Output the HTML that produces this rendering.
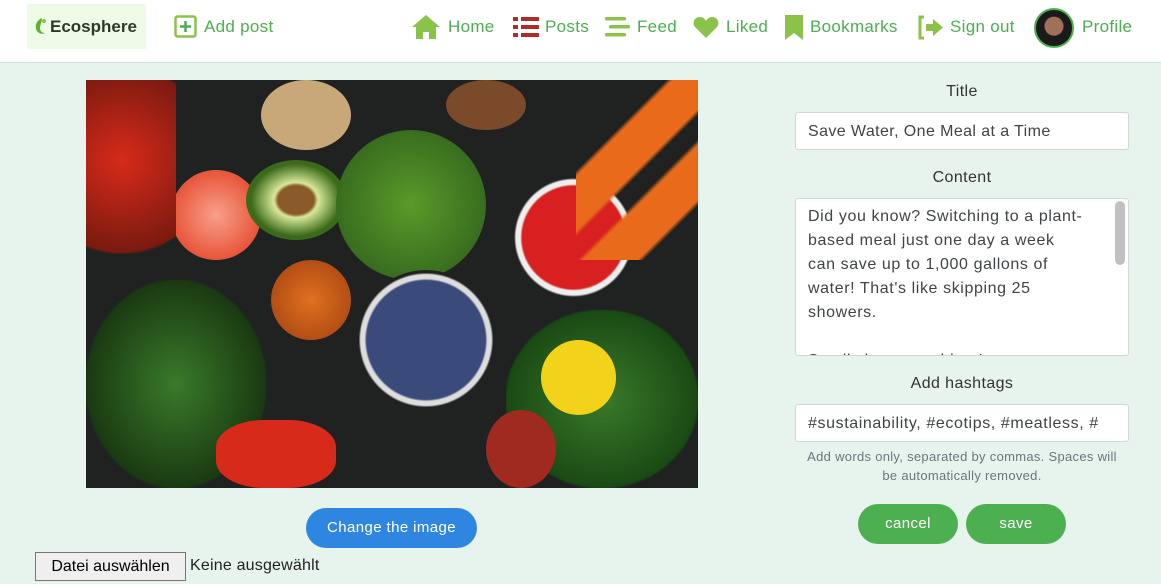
<!DOCTYPE html>
<html><head><meta charset="utf-8"><style>
*{box-sizing:border-box;margin:0;padding:0}
body{width:1161px;height:584px;overflow:hidden;background:#e7f4ed;font-family:"Liberation Sans",sans-serif;position:relative;color:#3f4448;letter-spacing:0.4px}
.nav{position:absolute;left:0;top:0;width:1161px;height:63px;background:#fff;border-bottom:1px solid #d6e2dc}
.a{position:absolute;font-size:17px;color:#4caf50;top:17px;white-space:nowrap;letter-spacing:0.3px}
.lbl{position:absolute;font-size:16px;color:#333;text-align:center;width:334px;left:795px}
.inp{position:absolute;left:795px;width:334px;background:#fff;border:1px solid #cfd8d5;border-radius:3px;font-size:16px;color:#3f4448;padding-left:12px}
.btn{position:absolute;background:#4caf50;color:#fff;border-radius:20px;font-size:15px;text-align:center;line-height:40px;height:40px;width:100px;top:504px}
</style></head><body>
<div class="nav">
<div style="position:absolute;left:27px;top:4px;width:119px;height:45px;background:#eefbe6"></div>
<svg style="position:absolute;left:34px;top:17px" width="14" height="18" viewBox="0 0 14 18"><path d="M8 1C3 3 1 8 2 12c1 4 6 6 9 4-3 0-5-2-5-5 0-3 2-6 2-10z" fill="#5fb236"/><circle cx="10" cy="4" r="2" fill="#8bc34a"/></svg>
<div style="position:absolute;left:50px;top:17px;font-size:17px;font-weight:bold;color:#2b3a2a;letter-spacing:0">Ecosphere</div>
<svg style="position:absolute;left:174px;top:15px" width="23" height="23" viewBox="0 0 23 23"><rect x="1.5" y="1.5" width="20" height="20" rx="2" fill="none" stroke="#8bc34a" stroke-width="2.5"/><path d="M11.5 6v11M6 11.5h11" stroke="#4caf50" stroke-width="2.5"/></svg>
<div class="a" style="left:204px">Add post</div>
<svg style="position:absolute;left:411px;top:14px" width="30" height="26" viewBox="0 0 30 26"><path d="M15 1L1 13h4v12h7v-7h6v7h7V13h4z" fill="#8bc34a"/></svg>
<div class="a" style="left:448px">Home</div>
<svg style="position:absolute;left:513px;top:17px" width="26" height="21" viewBox="0 0 26 21"><g fill="#b02a2a"><rect x="0" y="0" width="5" height="4"/><rect x="0" y="8" width="5" height="4"/><rect x="0" y="16" width="5" height="4"/><rect x="8" y="0" width="18" height="4"/><rect x="8" y="8" width="18" height="4"/><rect x="8" y="16" width="18" height="4"/></g></svg>
<div class="a" style="left:545px">Posts</div>
<svg style="position:absolute;left:605px;top:17px" width="25" height="21" viewBox="0 0 25 21"><g fill="#8bc34a"><rect x="0" y="0" width="21" height="3.5" rx="1.5"/><rect x="4" y="8" width="21" height="3.5" rx="1.5"/><rect x="0" y="16" width="21" height="3.5" rx="1.5"/></g></svg>
<div class="a" style="left:637px">Feed</div>
<svg style="position:absolute;left:693px;top:16px" width="26" height="23" viewBox="0 0 26 23"><path d="M13 22L2 11C-1 7 1 1 7 1c3 0 5 2 6 4 1-2 3-4 6-4 6 0 8 6 5 10z" fill="#8bc34a"/></svg>
<div class="a" style="left:726px">Liked</div>
<svg style="position:absolute;left:784px;top:14px" width="20" height="26" viewBox="0 0 20 26"><path d="M1 1h18v25l-9-7-9 7z" fill="#8bc34a"/></svg>
<div class="a" style="left:810px">Bookmarks</div>
<svg style="position:absolute;left:917px;top:15px" width="27" height="25" viewBox="0 0 27 25"><path d="M7 2H3v21h4" fill="none" stroke="#8bc34a" stroke-width="3"/><path d="M9 9h7V4l10 8.5L16 21v-5H9z" fill="#8bc34a"/></svg>
<div class="a" style="left:950px">Sign out</div>
<div style="position:absolute;left:1034px;top:8px;width:40px;height:40px;border-radius:50%;background:radial-gradient(circle at 50% 45%,#a0705a 0 9px,#1a1a1a 10px);border:2px solid #4caf50"></div>
<div class="a" style="left:1082px">Profile</div>
</div>
<div style="position:absolute;left:86px;top:80px;width:612px;height:408px;background:#1f2220;overflow:hidden">
<div style="position:absolute;left:85px;top:90px;width:90px;height:90px;border-radius:50%;background:radial-gradient(#f7a08a,#e8553a 70%,#f5d6a0 72%)"></div>
<div style="position:absolute;left:160px;top:80px;width:100px;height:80px;border-radius:50%;background:radial-gradient(#8a5a2a 0 18px,#d9e89a 22px,#3b6b1a 45px)"></div>
<div style="position:absolute;left:0;top:0;width:90px;height:200px;background:radial-gradient(circle at 40% 40%,#d82a1a,#7a1a10 70%,transparent 72%)"></div>
<div style="position:absolute;left:250px;top:50px;width:150px;height:150px;border-radius:50%;background:radial-gradient(#5a9a2a,#2a5a1a)"></div>
<div style="position:absolute;left:415px;top:85px;width:145px;height:145px;border-radius:50%;background:radial-gradient(#d82020 50%,#eee 52%,#eee 56%,#1f2220 58%)"></div>
<div style="position:absolute;left:270px;top:190px;width:140px;height:140px;border-radius:50%;background:radial-gradient(#3a4a7a 60%,#ddd 62%,#ddd 66%,#1f2220 68%)"></div>
<div style="position:absolute;left:185px;top:180px;width:80px;height:80px;border-radius:50%;background:radial-gradient(#e07020,#a04010)"></div>
<div style="position:absolute;left:0;top:200px;width:180px;height:208px;background:radial-gradient(#3a7a2a,#1a3a12 70%,transparent 72%)"></div>
<div style="position:absolute;left:420px;top:230px;width:192px;height:178px;background:radial-gradient(#3a7a2a,#1a4a14 70%,transparent 72%)"></div>
<div style="position:absolute;left:455px;top:260px;width:75px;height:75px;border-radius:50%;background:#f2d31a"></div>
<div style="position:absolute;left:490px;top:0;width:122px;height:180px;background:linear-gradient(135deg,transparent 30%,#e86a1a 32%,#e86a1a 50%,transparent 52%,transparent 60%,#e86a1a 62%,#e86a1a 80%,transparent 82%)"></div>
<div style="position:absolute;left:175px;top:0;width:90px;height:70px;border-radius:50%;background:#c8a878"></div>
<div style="position:absolute;left:360px;top:0;width:80px;height:50px;border-radius:50%;background:#7a4a2a"></div>
<div style="position:absolute;left:130px;top:340px;width:120px;height:68px;border-radius:40%;background:#d82a1a"></div>
<div style="position:absolute;left:400px;top:330px;width:70px;height:78px;border-radius:50%;background:#a02a20"></div>
</div>
<div style="position:absolute;left:306px;top:508px;width:171px;height:40px;border-radius:20px;background:#2f86e0;color:#fff;font-size:15px;text-align:center;line-height:40px">Change the image</div>
<div style="position:absolute;left:35px;top:552px;width:151px;height:29px;border:1px solid #767676;background:#efefef;font-size:16px;color:#000;text-align:center;line-height:27px;letter-spacing:0">Datei auswählen</div>
<div style="position:absolute;left:190px;top:557px;font-size:16px;color:#222;letter-spacing:0.2px">Keine ausgewählt</div>
<div class="lbl" style="top:83px">Title</div>
<div class="inp" style="top:112px;height:38px;line-height:38px">Save Water, One Meal at a Time</div>
<div class="lbl" style="top:169px">Content</div>
<div class="inp" style="top:198px;height:158px;padding:6px 20px 0 12px;line-height:24px;overflow:hidden;letter-spacing:0.6px;white-space:nowrap">Did you know? Switching to a plant-<br>based meal just one day a week<br>can save up to 1,000 gallons of<br>water! That's like skipping 25<br>showers.<br><br>Small changes add up!</div>
<div style="position:absolute;left:1115px;top:201px;width:10px;height:64px;border-radius:5px;background:#c1c1c1"></div>
<div class="lbl" style="top:375px">Add hashtags</div>
<div class="inp" style="top:404px;height:38px;line-height:38px;overflow:hidden;white-space:nowrap;letter-spacing:0.6px">#sustainability, #ecotips, #meatless, #</div>
<div style="position:absolute;left:790px;top:447px;width:344px;font-size:13px;color:#6c757d;text-align:center;line-height:19px;letter-spacing:0.3px;white-space:nowrap">Add words only, separated by commas. Spaces will<br>be automatically removed.</div>
<div class="btn" style="left:858px">cancel</div>
<div class="btn" style="left:966px">save</div>
</body></html>
